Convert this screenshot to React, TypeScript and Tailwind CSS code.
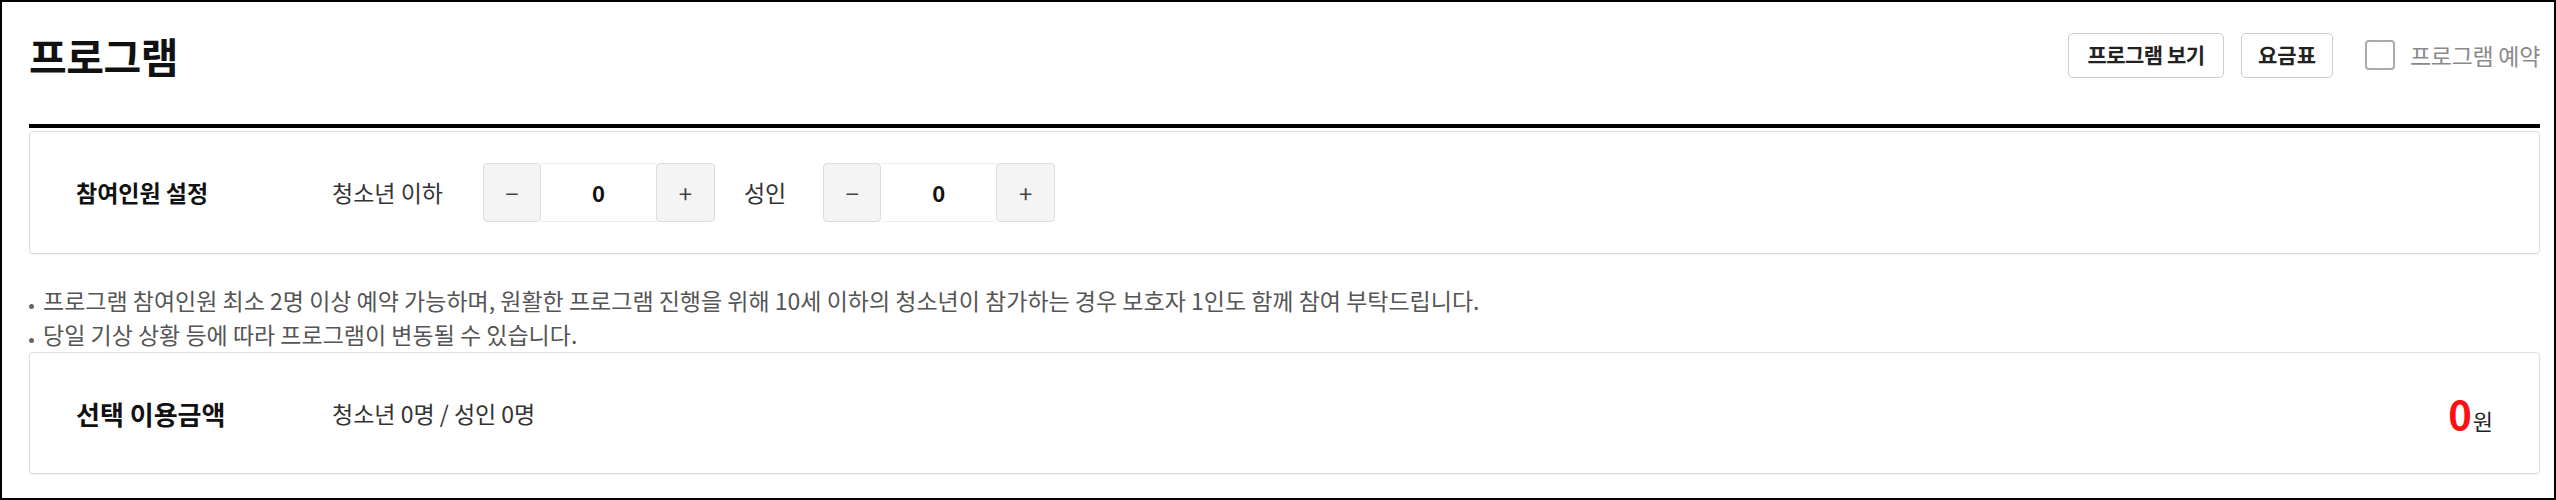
import React from "react";

const FONT = { fontFamily: '"Noto Sans CJK KR", "Noto Sans", sans-serif' };

function Stepper() {
  return (
    <div className="flex h-[59px] w-[232px]">
      <button className="flex h-full w-[58px] items-center justify-center rounded-[4px] border border-[#dddddd] bg-[#f4f4f4] text-[24px] leading-none text-[#444]">
        −
      </button>
      <div className="flex h-full flex-1 items-center justify-center border-y border-[#eeeeee] bg-white text-[22px] font-bold text-[#111]">
        0
      </div>
      <button className="flex h-full w-[59px] items-center justify-center rounded-[4px] border border-[#dddddd] bg-[#f4f4f4] text-[24px] leading-none text-[#444]">
        +
      </button>
    </div>
  );
}

function Note({ children }: { children: React.ReactNode }) {
  return (
    <div className="flex h-[34px] items-center">
      <span className="mr-[9px] mt-[12px] h-[5px] w-[5px] shrink-0 rounded-full bg-[#666]" />
      <span>{children}</span>
    </div>
  );
}

export default function App() {
  return (
    <div
      style={FONT}
      className="box-border flex h-[500px] w-[2556px] flex-col border-2 border-black bg-white pl-[27px] pr-[14px] pt-[8px]"
    >
      <div className="flex h-[90px] items-center justify-between">
        <h1 className="text-[41px] font-bold leading-none tracking-[-0.5px] text-[#111]">프로그램</h1>
        <div className="flex items-center">
          <button className="h-[45px] w-[156px] rounded-[5px] border border-[#cccccc] bg-white text-[21px] font-bold tracking-[-0.5px] text-[#222]">
            프로그램 보기
          </button>
          <button className="ml-[17px] h-[45px] w-[92px] rounded-[5px] border border-[#cccccc] bg-white text-[21px] font-bold text-[#222]">
            요금표
          </button>
          <span className="ml-[32px] h-[30px] w-[30px] rounded-[4px] border-2 border-[#aaaaaa] bg-white" />
          <span className="ml-[15px] text-[23px] tracking-[-0.3px] text-[#8a8a8a]">프로그램 예약</span>
        </div>
      </div>

      <div className="mt-[24px] border-t-[4px] border-black" />

      <div className="mt-[3px] flex h-[123px] items-center rounded-[4px] border border-[#dcdcdc] pl-[46px] shadow-[0_1px_2px_rgba(0,0,0,0.06)]">
        <span className="w-[256px] text-[23px] font-bold text-[#111]">참여인원 설정</span>
        <span className="mr-[40px] text-[23px] text-[#333]">청소년 이하</span>
        <Stepper />
        <span className="ml-[29px] mr-[37px] text-[23px] text-[#333]">성인</span>
        <Stepper />
      </div>

      <div className="mt-[29px] flex flex-col text-[23px] text-[#555]">
        <Note>
          프로그램 참여인원 최소 2명 이상 예약 가능하며, 원활한 프로그램 진행을 위해 10세 이하의 청소년이 참가하는 경우 보호자 1인도 함께 참여 부탁드립니다.
        </Note>
        <Note>당일 기상 상황 등에 따라 프로그램이 변동될 수 있습니다.</Note>
      </div>

      <div className="mt-[1px] flex h-[122px] items-center rounded-[4px] border border-[#dcdcdc] pl-[46px] pr-[46px] shadow-[0_1px_2px_rgba(0,0,0,0.06)]">
        <span className="w-[256px] text-[26px] font-bold text-[#111]">선택 이용금액</span>
        <span className="text-[23px] text-[#333]">청소년 0명 / 성인 0명</span>
        <div className="ml-auto flex items-baseline">
          <span className="text-[40px] font-bold leading-none text-[#ff1010]">0</span>
          <span className="ml-[1px] text-[22px] leading-none text-[#222]">원</span>
        </div>
      </div>
    </div>
  );
}
